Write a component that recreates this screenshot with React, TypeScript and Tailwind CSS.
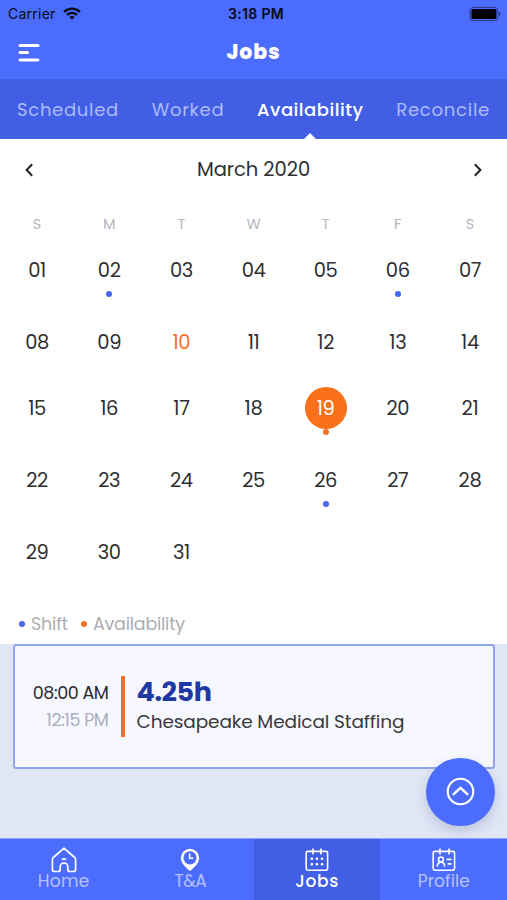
import React, { useState } from "react";
import clsx from "clsx";

const WEEKDAYS = ["S", "M", "T", "W", "T", "F", "S"];
const DAYS = Array.from({ length: 31 }, (_, i) => i + 1);
const SHIFTS = [2, 6, 26];
const AVAILABLE = [19];
const TODAY = 10;

const TABS = [
  { label: "Scheduled", spacing: "tracking-[0.7px]" },
  { label: "Worked", spacing: "tracking-[0.7px]" },
  { label: "Availability", spacing: "tracking-[0.5px]" },
  { label: "Reconcile", spacing: "tracking-[0.75px]" },
];

function StatusBar() {
  return (
    <div className="grid h-[27px] grid-cols-3 items-center pr-[6px] pl-2 font-['Inter',sans-serif] text-[#080b18]">
      <div className="flex items-center gap-[7px]">
        <span className="text-[14px] tracking-[0.25px]">Carrier</span>
        <svg width="18" height="13" viewBox="0 0 18 13" fill="none" stroke="currentColor" strokeWidth="2.3">
          <path d="M1 4.8C5.5 0.5 12.5 0.5 17 4.8" />
          <path d="M4 8C6.8 5.2 11.2 5.2 14 8" />
          <path d="M6.4 10.1C7.9 8.7 10.1 8.7 11.6 10.1L9 12.8Z" fill="currentColor" stroke="none" />
        </svg>
      </div>
      <span className="pl-[3px] text-center text-[14px] font-semibold tracking-[0.35px] whitespace-nowrap">3:18 PM</span>
      <svg className="justify-self-end" width="32" height="14" viewBox="0 0 32 14">
        <rect x="0.9" y="0.5" width="28" height="13" rx="3.2" fill="none" stroke="#080b18" strokeOpacity="0.5" />
        <rect x="2.4" y="2" width="25" height="10" rx="1.8" fill="#000" />
        <path d="M30 4.8C31.6 5.4 31.6 8.6 30 9.2Z" fill="#080b18" fillOpacity="0.6" />
      </svg>
    </div>
  );
}

function Chevron({ flip = false }: { flip?: boolean }) {
  return (
    <svg className={clsx(flip && "rotate-180")} width="10" height="14" viewBox="0 0 10 14" fill="none" stroke="#222" strokeWidth="2">
      <path d="M8.2 1.2L2.6 7L8.2 12.8" />
    </svg>
  );
}

function Day({ day }: { day: number }) {
  const available = AVAILABLE.includes(day);
  return (
    <div className="flex flex-col items-center pt-[9px]">
      <span
        className={clsx(
          "flex size-[42px] items-center justify-center rounded-full pt-[2px] text-[19.5px] tracking-[-0.4px]",
          available ? "bg-[#fa701b] text-white" : day === TODAY ? "text-[#f5712a]" : "text-[#2f2f31]",
        )}
      >
        {String(day).padStart(2, "0")}
      </span>
      {(available || SHIFTS.includes(day)) && (
        <span className={clsx("-mt-[0.5px] size-[6px] rounded-full", available ? "bg-[#f5701f]" : "bg-[#4568f0]")} />
      )}
    </div>
  );
}

function HomeIcon() {
  return (
    <svg width="26" height="26" viewBox="0 0 26 26" fill="none" stroke="#fff" strokeWidth="1.7" strokeLinejoin="round" strokeLinecap="round">
      <path d="M13 1.2L2.3 10.5C1.6 11.2 1.4 11.6 1.4 12.5V22.5C1.4 23.7 2.2 24.5 3.4 24.5H7.2C8.4 24.5 9.2 23.7 9.2 22.5V19.8C9.2 17.7 10.9 16 13 16S16.8 17.7 16.8 19.8V22.5C16.8 23.7 17.6 24.5 18.8 24.5H22.6C23.8 24.5 24.6 23.7 24.6 22.5V12.5C24.6 11.6 24.4 11.2 23.7 10.5Z" />
      <path d="M11.6 12.2H14.4" />
    </svg>
  );
}

function ClockPinIcon() {
  return (
    <svg width="20" height="24" viewBox="0 0 20 24">
      <path d="M10 0.8A9.2 9.2 0 0 0 0.8 10C0.8 15.5 6 19.4 10 23C14 19.4 19.2 15.5 19.2 10A9.2 9.2 0 0 0 10 0.8Z" fill="#fff" />
      <circle cx="10" cy="9.8" r="6.6" fill="#4b6cfd" />
      <path d="M9.6 5.6V10.2H13.2" fill="none" stroke="#fff" strokeWidth="1.5" />
    </svg>
  );
}

function CalendarIcon() {
  return (
    <svg width="24" height="24" viewBox="0 0 24 24" fill="none" stroke="#fff" strokeWidth="1.6" strokeLinecap="round">
      <rect x="1.2" y="3.4" width="21.4" height="18.8" rx="1.6" />
      <path d="M8 1V6M16 1V6" />
      {[10.8, 16.2].map((y) => (
        <path key={y} d={`M6.8 ${y}H6.9M11.9 ${y}H12M17 ${y}H17.1`} strokeWidth="2.6" />
      ))}
    </svg>
  );
}

function ProfileIcon() {
  return (
    <svg width="24" height="24" viewBox="0 0 24 24" fill="none" stroke="#fff" strokeWidth="1.6" strokeLinecap="round">
      <rect x="1.2" y="3.4" width="21.4" height="18.8" rx="1.6" />
      <path d="M8 1V6M17 1V6" />
      <circle cx="8.9" cy="11.4" r="2.4" />
      <path d="M5.3 17.9C5.3 15.8 6.8 14.3 8.9 14.3S12.5 15.8 12.5 17.9M15.2 11.4H18.8M16.2 15.9H18.8" />
    </svg>
  );
}

const NAV = [
  { label: "Home", icon: <HomeIcon />, spacing: "tracking-[0.3px]" },
  { label: "T&A", icon: <ClockPinIcon />, spacing: "tracking-[-0.5px]" },
  { label: "Jobs", icon: <CalendarIcon />, spacing: "tracking-[0.7px]" },
  { label: "Profile", icon: <ProfileIcon />, spacing: "tracking-[0.1px]" },
];

export default function App() {
  const [tab, setTab] = useState("Availability");
  const [page, setPage] = useState("Jobs");

  return (
    <div className="relative flex h-[900px] w-[507px] flex-col overflow-hidden bg-white font-['Poppins','Inter',sans-serif]">
      <header className="h-[79px] shrink-0 bg-[#4b6cfd]">
        <StatusBar />
        <div className="grid h-[50px] grid-cols-3 items-center px-[18px]">
          <button className="justify-self-start pt-[2px]">
            <svg width="22" height="20" viewBox="0 0 22 20" stroke="#fff" strokeWidth="3" strokeLinecap="round">
              <path d="M2 2.5H20M2 9.5H9.5M2 17H20" />
            </svg>
          </button>
          <h1 className="pt-px text-center text-[20.5px] font-extrabold tracking-[0.8px] text-white">Jobs</h1>
        </div>
      </header>

      <nav className="flex h-[60px] shrink-0 items-center justify-between bg-[#425ee5] px-[17px]">
        {TABS.map(({ label, spacing }) => (
          <button
            key={label}
            onClick={() => setTab(label)}
            className={clsx(
              "relative flex h-full items-center text-[18px] whitespace-nowrap",
              spacing,
              tab === label ? "font-medium text-white" : "text-[#adbcf8]",
            )}
          >
            {label}
            {tab === label && (
              <svg className="absolute bottom-0 left-1/2 -translate-x-1/2" width="12" height="6" viewBox="0 0 12 6">
                <path d="M0 6L6 0L12 6Z" fill="#fff" />
              </svg>
            )}
          </button>
        ))}
      </nav>

      <section className="flex h-[504.5px] shrink-0 flex-col">
        <div className="flex h-[62px] items-center justify-between px-6">
          <button><Chevron /></button>
          <h2 className="text-[19.5px] tracking-[-0.05px] text-[#2f2f31]">March 2020</h2>
          <button><Chevron flip /></button>
        </div>
        <div className="grid h-[39px] grid-cols-7 px-px pt-[13px] text-center text-[14.5px] leading-5 text-[#b5b5ba]">
          {WEEKDAYS.map((d, i) => (
            <span key={i}>{d}</span>
          ))}
        </div>
        <div className="grid grid-cols-7 grid-rows-[72px_66px_72px_72px_72px] px-px">
          {DAYS.map((d) => (
            <Day key={d} day={d} />
          ))}
        </div>
        <div className="mt-[18px] flex items-center pl-[19px] text-[17.5px] leading-6 text-[#adadb1]">
          <span className="size-[6px] rounded-full bg-[#4568f0]" />
          <span className="ml-[6px] w-[50px] tracking-[-0.2px]">Shift</span>
          <span className="size-[6px] rounded-full bg-[#f5701f]" />
          <span className="ml-[6px] tracking-[-0.25px]">Availability</span>
        </div>
      </section>

      <main className="flex-1 bg-[#e1e6f5] pr-3 pl-[13px]">
        <article className="flex h-[125px] items-center rounded-[3px] border-2 border-[#93a4ee] bg-[#f7f8ff]">
          <div className="w-[93.5px] pt-px text-right text-[17.5px] leading-[27px] whitespace-nowrap">
            <p className="tracking-[-0.45px] text-[#29292d]">08:00 AM</p>
            <p className="tracking-[-0.45px] text-[#adaec0]">12:15 PM</p>
          </div>
          <div className="ml-3 h-[61px] w-1 bg-[#f27029]" />
          <div className="ml-3 whitespace-nowrap">
            <p className="text-[27px] leading-[32px] font-bold tracking-[-0.4px] text-[#2038a2]">4.25h</p>
            <p className="text-[18.5px] leading-[28px] tracking-[-0.12px] text-[#39393e]">Chesapeake Medical Staffing</p>
          </div>
        </article>
      </main>

      <button className="absolute top-[757.5px] right-[12.5px] flex size-[68.5px] items-center justify-center rounded-full bg-[#4b6cfd] shadow-[0_5px_12px_rgba(60,75,130,0.22)]">
        <svg width="29" height="29" viewBox="0 0 30 30" fill="none" stroke="#fff" strokeWidth="2.2" strokeLinecap="round" strokeLinejoin="round">
          <circle cx="15" cy="15" r="13.2" />
          <path d="M7.9 17.7L15 11.2L22.1 17.7" strokeWidth="2.6" />
        </svg>
      </button>

      <footer className="grid h-[62px] shrink-0 grid-cols-4 border-t border-[#8fa2f5] bg-[#4b6cfd]">
        {NAV.map(({ label, icon, spacing }) => (
          <button
            key={label}
            onClick={() => setPage(label)}
            className={clsx("flex flex-col items-center pt-2 pl-[0.5px]", page === label && "bg-[#425ee5]")}
          >
            <span className="flex h-[25px] items-center">{icon}</span>
            <span
              className={clsx(
                "text-[17px] leading-[18px]",
                spacing,
                page === label ? "font-medium text-white" : "text-[#b5c2ff]",
              )}
            >
              {label}
            </span>
          </button>
        ))}
      </footer>
    </div>
  );
}
